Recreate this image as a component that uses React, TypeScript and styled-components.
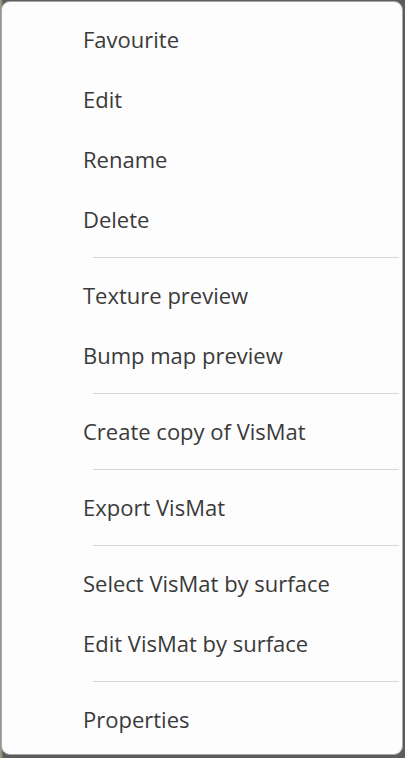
import React from 'react';
import styled, { createGlobalStyle } from 'styled-components';

const GlobalStyle = createGlobalStyle`
    html, body {
        margin:0;
        padding:0;
        background:#5c5c5c;
    }
    #root{
        width:405px;
        height:758px;
    }
`;

const Backdrop = styled.div`
    width:405px;
    height:758px;
    box-sizing:border-box;
    padding:1px 2px 3px 1px;
    background:linear-gradient(to right, #9a9a9a 0, #8f8a6a 2px, #5c5c5c 3px);
`;

const Menu = styled.ul`
    list-style:none;
    margin:0;
    height:100%;
    box-sizing:border-box;
    padding:7px 0 5px 0;
    background:#fdfdfd;
    border:1px solid #a8a8a8;
    border-radius:9px;
    display:flex;
    flex-direction:column;
    font-family:"Open Sans", "Noto Sans", sans-serif;
`;

const Item = styled.li`
    height:60px;
    flex-shrink:0;
    display:flex;
    align-items:center;
    padding-left:81px;
    font-size:22px;
    font-weight:400;
    color:#3a3a3a;
    cursor:default;
    &:hover{
        background:#f0f0f0;
    }
`;

const Separator = styled.li`
    height:16px;
    flex-shrink:0;
    display:flex;
    align-items:center;
    padding-left:91px;
    padding-right:3px;
    &::after{
        content:'';
        display:block;
        flex:1;
        height:1px;
        background:#d6d6d6;
    }
`;

const groups = [
    ['Favourite', 'Edit', 'Rename', 'Delete'],
    ['Texture preview', 'Bump map preview'],
    ['Create copy of VisMat'],
    ['Export VisMat'],
    ['Select VisMat by surface', 'Edit VisMat by surface'],
    ['Properties'],
];

export default function App() {
    return (
        <>
            <GlobalStyle />
            <Backdrop>
                <Menu>
                    {groups.map((group, i) => (
                        <React.Fragment key={i}>
                            {i > 0 && <Separator />}
                            {group.map((label) => (
                                <Item key={label}>{label}</Item>
                            ))}
                        </React.Fragment>
                    ))}
                </Menu>
            </Backdrop>
        </>
    );
}
